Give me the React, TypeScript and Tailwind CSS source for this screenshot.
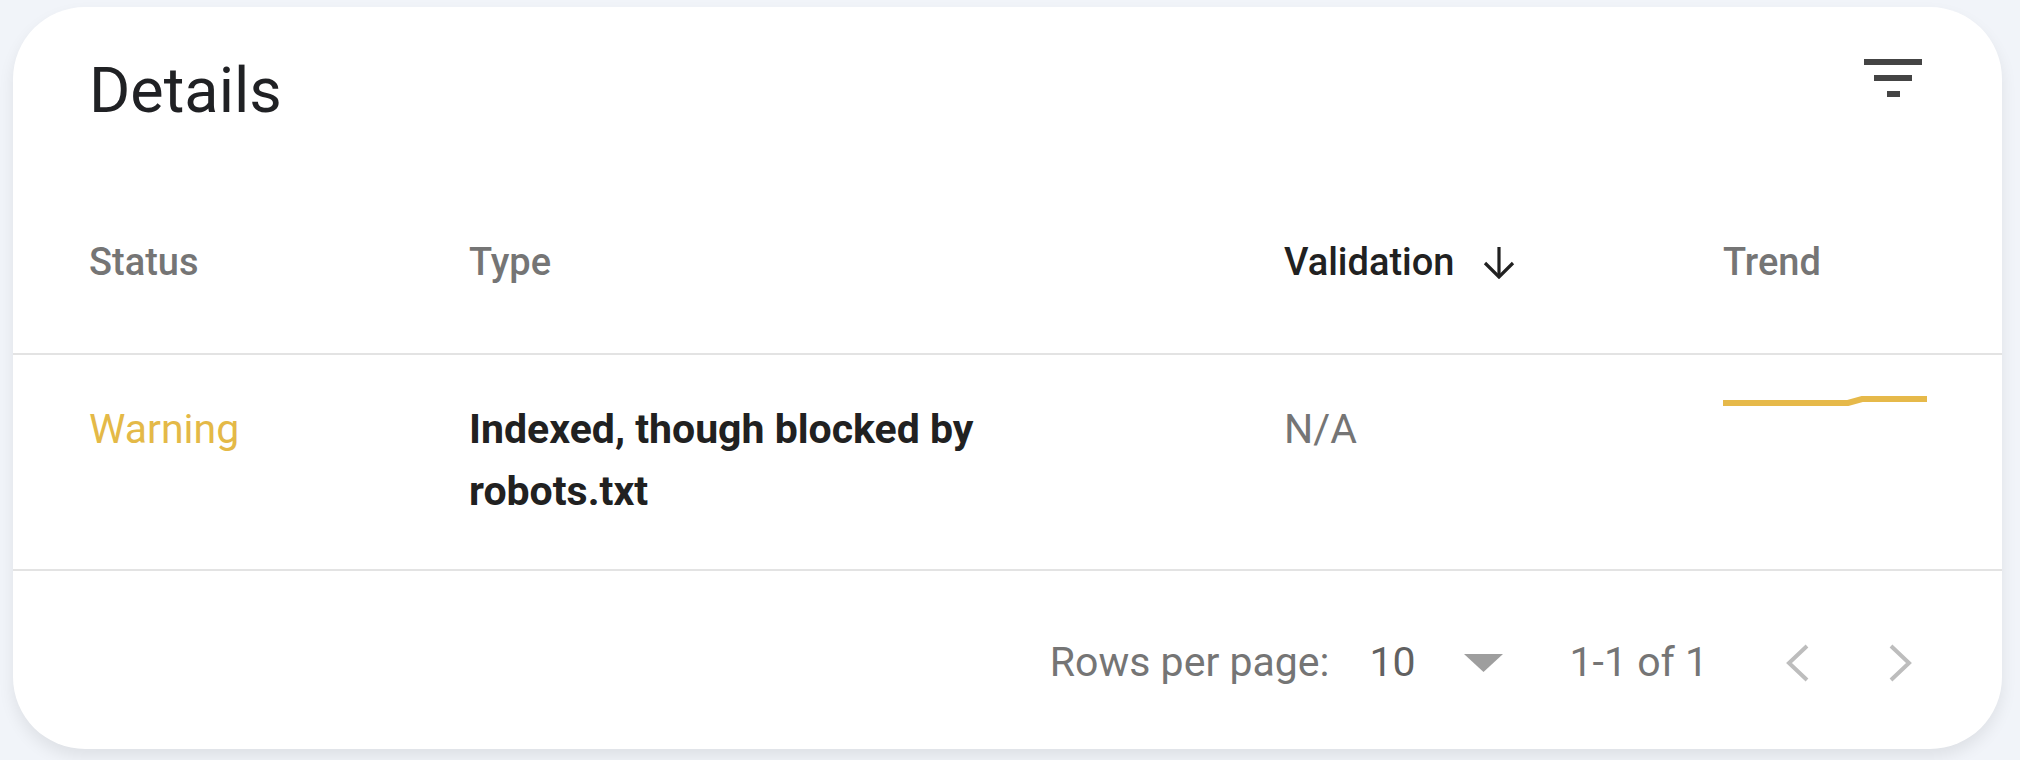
import React from "react";

const font = { fontFamily: "Roboto, 'Noto Sans', Arial, sans-serif" };

function FilterIcon() {
  return (
    <svg width="58" height="38" viewBox="0 0 58 38" className="shrink-0">
      <rect x="0" y="0" width="58" height="6" fill="#444444" />
      <rect x="10" y="16" width="38" height="6" fill="#444444" />
      <rect x="23" y="32" width="13" height="6" fill="#444444" />
    </svg>
  );
}

function ArrowDown() {
  return (
    <svg width="36" height="32" viewBox="0 0 36 32" fill="none" stroke="#212121" strokeWidth="3.2">
      <path d="M18 0 V30" />
      <path d="M4 16 L18 30 L32 16" />
    </svg>
  );
}

function Chevron({ dir }: { dir: "left" | "right" }) {
  return (
    <svg width="26" height="38" viewBox="0 0 26 38" fill="none" stroke="#bdbdbd" strokeWidth="4">
      {dir === "left" ? <path d="M23 2 L5 19 L23 36" /> : <path d="M3 2 L21 19 L3 36" />}
    </svg>
  );
}

function TrendLine() {
  return (
    <svg width="204" height="14" viewBox="0 0 204 14" fill="none" className="-mt-1">
      <path d="M0 9 H125 L139 5 H204" stroke="#e6b94a" strokeWidth="6" />
    </svg>
  );
}

export default function App() {
  return (
    <div className="min-h-[760px] w-[2020px] bg-[#f1f4f9] pt-[7px] pl-[13px]" style={font}>
      <div className="w-[1989px] h-[742px] bg-white rounded-[72px] shadow-[0_8px_16px_rgba(0,0,0,0.08)] pt-[47px] overflow-hidden">
        {/* title */}
        <div className="flex justify-between items-start pl-[76px] pr-[80px]">
          <h1 className="text-[63px] leading-[74px] font-normal text-[#202124]">Details</h1>
          <div className="mt-[5px]">
            <FilterIcon />
          </div>
        </div>

        {/* table header */}
        <div className="grid grid-cols-[380px_815px_439px_1fr] pl-[76px] pt-[112px] pb-[68px] border-b-2 border-[#e3e3e3] text-[38px] leading-[45px] font-medium text-[#757575]">
          <div>Status</div>
          <div>Type</div>
          <div className="flex items-center gap-[27px] text-[#212121]">
            <span>Validation</span>
            <ArrowDown />
          </div>
          <div>Trend</div>
        </div>

        {/* row */}
        <div className="grid grid-cols-[380px_815px_439px_1fr] items-start pl-[76px] pt-[43px] pb-[47px] border-b-2 border-[#e3e3e3] text-[41px] leading-[62px]">
          <div className="text-[#e4b947]">Warning</div>
          <div className="w-[540px] font-bold text-[#212121]">Indexed, though blocked by robots.txt</div>
          <div className="text-[#757575]">N/A</div>
          <div>
            <TrendLine />
          </div>
        </div>

        {/* footer */}
        <div className="flex justify-end items-center pr-[88px] pt-[69px] text-[41px] leading-[45px] text-[#757575]">
          <span>Rows per page:</span>
          <span className="ml-[40px] text-[#616161]">10</span>
          <svg width="39" height="18" viewBox="0 0 39 18" className="ml-[48px]">
            <path d="M0 0 H39 L19.5 18 Z" fill="#9e9e9e" />
          </svg>
          <span className="ml-[67px]">1-1 of 1</span>
          <div className="ml-[76px]">
            <Chevron dir="left" />
          </div>
          <div className="ml-[78px]">
            <Chevron dir="right" />
          </div>
        </div>
      </div>
    </div>
  );
}
